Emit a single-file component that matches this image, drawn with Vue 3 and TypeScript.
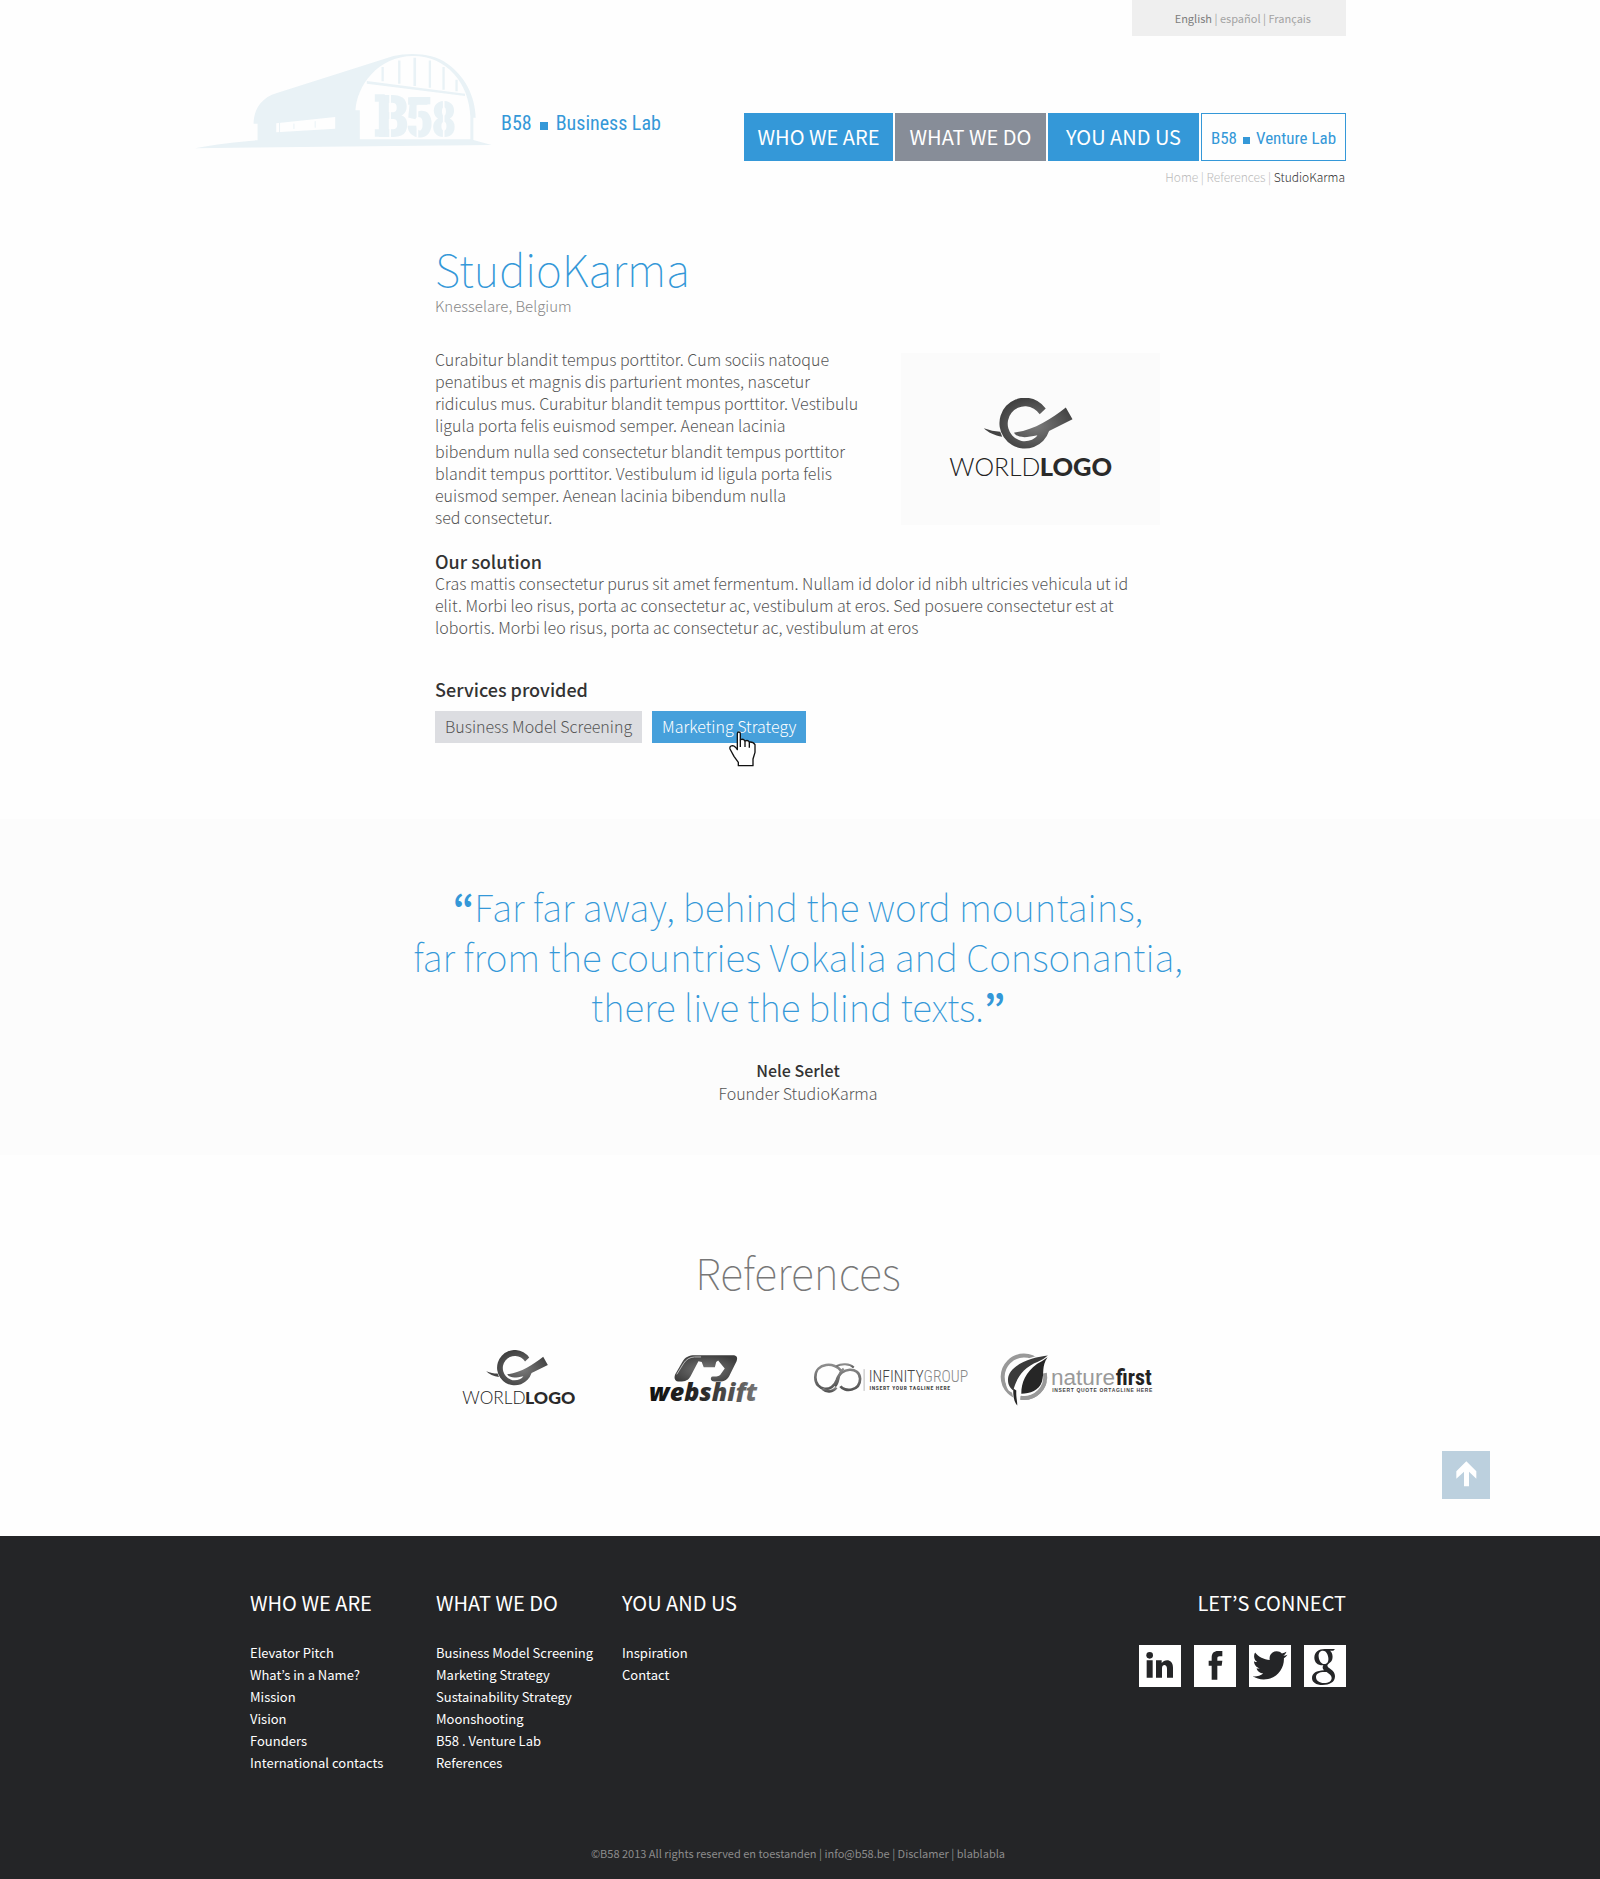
<script setup lang="ts">
interface NavItem { label: string; tone: 'blue' | 'grey' }
interface FooterColumn { title: string; links: string[] }

const languages: string[] = ['English', 'español', 'Français']
const nav: NavItem[] = [
  { label: 'WHO WE ARE', tone: 'blue' },
  { label: 'WHAT WE DO', tone: 'grey' },
  { label: 'YOU AND US', tone: 'blue' },
]
const columns: FooterColumn[] = [
  { title: 'WHO WE ARE', links: ['Elevator Pitch', 'What’s in a Name?', 'Mission', 'Vision', 'Founders', 'International contacts'] },
  { title: 'WHAT WE DO', links: ['Business Model Screening', 'Marketing Strategy', 'Sustainability Strategy', 'Moonshooting', 'B58 . Venture Lab', 'References'] },
  { title: 'YOU AND US', links: ['Inspiration', 'Contact'] },
]
</script>

<template>
  <div class="page">
    <svg width="0" height="0" class="defs" aria-hidden="true">
      <defs>
        <radialGradient id="steel" cx="50%" cy="55%" r="60%">
          <stop offset="0" stop-color="#7a7a7a" />
          <stop offset="1" stop-color="#3c3c3c" />
        </radialGradient>
        <linearGradient id="word" x1="0" x2="1" y1="0" y2="0">
          <stop offset="0" stop-color="#111" />
          <stop offset="0.5" stop-color="#2a2a2a" />
          <stop offset="1" stop-color="#777" />
        </linearGradient>
        <linearGradient id="ring" x1="0" x2="0" y1="0" y2="1">
          <stop offset="0" stop-color="#8d8d8d" />
          <stop offset="1" stop-color="#555" />
        </linearGradient>
        <symbol id="worldlogo" viewBox="176 172 490 238">
          <path fill="url(#steel)" d="M465 203A76 76 0 1 0 475 270L545 235L525 200C480 235 430 268 370 275C380 290 400 292 440 283C430 300 400 305 385 297A52 52 0 1 1 447 220Z" />
          <path fill="#444" d="M280 262C298 268 312 272 329 272L335 287C312 284 292 274 280 262Z" />
          <text x="177" y="404" class="world-thin">WORLD</text>
          <text x="447" y="404" class="world-bold">LOGO</text>
        </symbol>
      </defs>
    </svg>

    <header class="wrap">
      <div class="languages">
        <template v-for="(l, i) in languages" :key="l"><span v-if="i"> | </span><a href="#" :class="{ current: i === 0 }">{{ l }}</a></template>
      </div>
      <div class="masthead">
        <a href="#" class="brand" aria-label="B58 Business Lab">
          <svg class="hangar" viewBox="44 38 892 288" aria-hidden="true">
            <path fill="#e9f2f6" d="M220 250C220 212 240 172 290 158L640 47C690 36 760 38 802 70C852 105 886 165 887 232H880V299L935 314L44 324C100 312 180 303 232 300V250Z" />
            <path fill="#fefefe" d="M539 297V210H526C530 140 590 47 700 47C800 47 868 130 871 230V297Z" />
            <path fill="#e9f2f6" d="M560 122L855 160V167L560 130ZM604 80h7v43h-7zM654 60h7v70h-7zM700 52h8v85h-8zM746 60h7v82h-7zM787 80h7v68h-7zM826 118h7v35h-7z" />
            <path fill="#fefefe" d="M288 249L465 230V265L288 276Z" />
            <path stroke="#e9f2f6" stroke-width="3" d="M298 246V276M341 250V266M405 243V262" />
            <g class="stencil">
              <text x="588" y="289" font-size="178">B</text>
              <text x="677" y="289" font-size="166">5</text>
              <text x="753" y="289" font-size="152">8</text>
            </g>
            <path fill="#e9f2f6" d="M584 162h30v22h-30zM584 267h30v22h-30zM684 171h58v22h-58z" />
            <path stroke="#fefefe" stroke-width="5" d="M630 150V292M712 195V292M791 170V292" />
          </svg>
          <span class="lab brand-name">B58<i></i>Business Lab</span>
        </a>
        <div class="nav-block">
          <nav class="nav">
            <a v-for="n in nav" :key="n.label" href="#" :class="n.tone">{{ n.label }}</a>
            <a href="#" class="lab venture">B58<i></i>Venture Lab</a>
          </nav>
          <p class="crumbs"><a href="#">Home</a> | <a href="#">References</a> | <span>StudioKarma</span></p>
        </div>
      </div>
    </header>

    <main class="main">
      <h1>StudioKarma</h1>
      <p class="place">Knesselare, Belgium</p>
      <div class="intro">
        <div>
          <p>Curabitur blandit tempus porttitor. Cum sociis natoque<br>penatibus et magnis dis parturient montes, nascetur<br>ridiculus mus. Curabitur blandit tempus porttitor. Vestibulu<br>ligula porta felis euismod semper. Aenean lacinia</p>
          <p>bibendum nulla sed consectetur blandit tempus porttitor<br>blandit tempus porttitor. Vestibulum id ligula porta felis<br>euismod semper. Aenean lacinia bibendum nulla<br>sed consectetur.</p>
        </div>
        <div class="client"><svg class="client-logo" role="img" aria-label="Worldlogo"><use href="#worldlogo" /></svg></div>
      </div>
      <h2>Our solution</h2>
      <p>Cras mattis consectetur purus sit amet fermentum. Nullam id dolor id nibh ultricies vehicula ut id<br>elit. Morbi leo risus, porta ac consectetur ac, vestibulum at eros. Sed posuere consectetur est at<br>lobortis. Morbi leo risus, porta ac consectetur ac, vestibulum at eros</p>
      <h2 class="services">Services provided</h2>
      <div class="tags">
        <a href="#" class="tag">Business Model Screening</a>
        <a href="#" class="tag active">Marketing Strategy
          <svg class="cursor" viewBox="27 28 81 108" aria-hidden="true">
            <path fill="#fff" stroke="#111" stroke-width="4" stroke-linejoin="round" d="M52 84V36Q52 31 56.500 31Q61 31 61 36V54Q70 50 75 58Q84 54 88 61Q100 60 105 69V92L99 112V132H55V122L42 104L30 82Q28 73 37 72Q44 72 52 84Z" />
            <path fill="none" stroke="#111" stroke-width="4" d="M61 54V76M75 58V76M88 61V78" />
          </svg>
        </a>
      </div>
    </main>

    <section class="quote">
      <blockquote><b>“</b>Far far away, behind the word mountains,<br>far from the countries Vokalia and Consonantia,<br>there live the blind texts.<b>”</b></blockquote>
      <p class="name">Nele Serlet</p>
      <p>Founder StudioKarma</p>
    </section>

    <section class="references">
      <h2>References</h2>
      <div class="logos">
        <svg class="l-world" role="img" aria-label="Worldlogo"><use href="#worldlogo" /></svg>
        <svg class="l-webshift" viewBox="620 362 350 146" role="img" aria-label="Webshift">
          <path fill="url(#steel)" d="M716 446C700 446 697 436 701 424L722 388C732 370 745 366 760 366H876C890 366 892 374 888 384L868 424C862 440 850 446 836 446H826C812 446 806 440 812 431C822 430 832 432 838 426L852 406L832 382L826 386L822 402H788L782 386L772 384L748 430C742 442 732 446 716 446Z" />
          <path fill="none" stroke="#bbb" stroke-width="3" d="M706 424L726 392Q738 372 760 371H780" />
          <text x="622" y="504" class="webshift">webshift</text>
        </svg>
        <svg class="l-infinity" viewBox="68 96 464 92" role="img" aria-label="Infinity Group">
          <g fill="none" stroke="url(#ring)">
            <path stroke-width="8" d="M152 122C135 95 75 96 75 141C75 184 127 188 139 150C150 110 208 108 209 146C209 184 162 186 150 168" />
            <path stroke-width="7" d="M134 168C148 158 140 128 160 116" />
            <path stroke-width="6" d="M138 108C152 100 178 100 190 112" />
            <path stroke-width="8" d="M96 176C108 187 128 186 138 172" />
          </g>
          <path stroke="#999" stroke-width="2" d="M221 117V182" />
          <text x="235" y="156" class="inf">INFINITY<tspan fill="#888">GROUP</tspan></text>
          <text x="237" y="180" class="tagline inf-tag">INSERT YOUR TAGLINE HERE</text>
        </svg>
        <svg class="l-nature" viewBox="628 72 460 158" role="img" aria-label="Nature First">
          <circle cx="700" cy="143" r="64" fill="none" stroke="#999" stroke-width="12" />
          <path fill="#fefefe" d="M772 76C730 78 648 100 645 152C645 178 655 188 664 190L674 230H688L690 200C730 202 768 186 774 130Z" />
          <path fill="none" stroke="#999" stroke-width="12" d="M763 132A64 64 0 0 1 690 206" />
          <path fill="#3a3a3a" d="M772 79C730 83 655 105 652 150C651 168 660 178 668 184C676 150 696 116 742 98Q760 90 772 79Z" />
          <path fill="#262626" d="M771 84C752 112 762 130 754 158C746 184 718 194 692 194C692 160 705 130 740 104Q758 94 771 84Z" />
          <path fill="#262626" d="M668 178L677 184C676 205 680 215 680 229C670 218 667 200 668 178Z" />
          <text x="781" y="169" class="nature">nature</text>
          <text x="976" y="169" class="first">first</text>
          <text x="785" y="190" class="tagline nat-tag">INSERT QUOTE ORTAGLINE HERE</text>
        </svg>
      </div>
      <button type="button" class="to-top" aria-label="Back to top">
        <svg viewBox="0 0 144 144" aria-hidden="true"><path fill="#fff" d="M73 31L103 61V83L81 62V106H66V62L43 83V61Z" /></svg>
      </button>
    </section>

    <footer class="footer">
      <div class="wrap footer-row">
        <div v-for="c in columns" :key="c.title" class="col">
          <h3>{{ c.title }}</h3>
          <ul><li v-for="l in c.links" :key="l"><a href="#">{{ l }}</a></li></ul>
        </div>
        <div class="connect">
          <h3>LET’S CONNECT</h3>
          <div class="social">
            <a href="#" aria-label="LinkedIn"><svg viewBox="0 0 126 126"><path fill="#242527" d="M23 46h18v52H23zM51 46h17v8C76 42 102 40 102 68V98H84V71C84 57 69 57 69 70V98H51z" /><circle cx="32" cy="31" r="10" fill="#242527" /></svg></a>
            <a href="#" aria-label="Facebook"><svg viewBox="0 0 126 126"><path fill="#242527" d="M53 104V62H44V47H53V38C53 24 60 18 72 18H85V34H77C72 34 70 36 70 41V47H85L83 62H70V104z" /></svg></a>
            <a href="#" aria-label="Twitter"><svg viewBox="0 0 126 126"><path fill="#242527" transform="translate(11 9) scale(4.35)" d="M23.954 4.569c-.885.389-1.83.654-2.825.775 1.014-.611 1.794-1.574 2.163-2.723-.951.555-2.005.959-3.127 1.184-.896-.959-2.173-1.559-3.591-1.559-2.717 0-4.92 2.203-4.92 4.917 0 .39.045.765.127 1.124C7.691 8.094 4.066 6.13 1.64 3.161c-.427.722-.666 1.561-.666 2.475 0 1.71.87 3.213 2.188 4.096-.807-.026-1.566-.248-2.228-.616v.061c0 2.385 1.693 4.374 3.946 4.827-.413.111-.849.171-1.296.171-.314 0-.615-.03-.916-.086.631 1.953 2.445 3.377 4.604 3.417-1.68 1.319-3.809 2.105-6.102 2.105-.39 0-.779-.023-1.17-.067 2.189 1.394 4.768 2.209 7.557 2.209 9.054 0 13.999-7.496 13.999-13.986 0-.209 0-.42-.015-.63.961-.689 1.8-1.56 2.46-2.548z" /></svg></a>
            <a href="#" aria-label="Google"><svg viewBox="0 0 126 126"><path fill="#242527" fill-rule="evenodd" d="M62 12H93L88 17H78C88 24 88 44 80 51C72 58 66 61 74 68C84 75 93 80 93 94C93 112 76 120 56 120C36 120 24 112 24 99C24 84 38 77 60 76C55 71 55 66 58 61C42 62 31 52 31 38C31 22 44 12 62 12ZM57 17C47 17 43 25 44 35C45 47 52 57 61 57C71 57 74 49 73 39C72 27 66 17 57 17ZM62 81C44 81 36 87 36 96C36 107 46 114 60 114C74 114 83 108 83 99C83 91 76 87 68 81Z" /></svg></a>
          </div>
        </div>
      </div>
      <p class="legal">©B58 2013 All rights reserved en toestanden | <a href="#">info@b58.be</a> | <a href="#">Disclamer</a> | <a href="#">blablabla</a></p>
    </footer>
  </div>
</template>

<style>
body { margin: 0; background: #fefefe; }
</style>

<style scoped>
.page { font-family: "Noto Sans CJK KR", "Noto Sans", sans-serif; font-size: 16px; line-height: 22px; font-weight: 300; color: #555; }
.page a { color: inherit; text-decoration: none; }
h1, h2, h3, p, ul, blockquote { margin: 0; padding: 0; }
.defs { display: block; height: 0; }
.wrap { box-sizing: border-box; max-width: 1100px; margin: 0 auto; padding-right: 4px; }

.languages { box-sizing: border-box; width: 214px; height: 36px; margin-left: auto; padding-right: 35px; background: #efefef; text-align: right; font-size: 11px; line-height: 36px; font-weight: 400; color: #a3a3a3; white-space: pre; }
.languages .current { color: #7d7d7d; }
.masthead { display: flex; justify-content: space-between; padding-top: 17px; }
.brand { display: flex; margin-left: -55px; }
.hangar { display: block; width: 297px; height: 96px; }
.stencil { font-family: "Roboto Condensed", "Roboto", sans-serif; font-weight: 900; fill: #e9f2f6; }
.lab { font-family: "Roboto Condensed", "Roboto", sans-serif; white-space: nowrap; }
.lab i { display: inline-block; width: 8px; height: 8px; margin: 0 8px; background: #3498d8; }
.page .brand-name { margin: 58px 0 0 9px; font-size: 20px; line-height: 24px; font-weight: 400; color: #3498d8; }
.nav-block { margin-top: 60px; }
.nav { display: grid; grid-template-columns: 149px 151px 151px 145px; gap: 2px; }
.nav a { box-sizing: border-box; height: 48px; text-align: center; font-size: 20px; line-height: 47px; font-weight: 400; color: #fff; }
.nav .blue { background: #3498d8; }
.nav .grey { background: #878d98; }
.nav .venture { border: 1px solid #3498d8; font-size: 17px; line-height: 48px; color: #3498d8; }
.nav .venture i { width: 7px; height: 7px; margin: 0 6px; }
.crumbs { margin-top: 8px; padding-right: 1px; text-align: right; font-size: 12px; line-height: 16px; color: #bbb; }
.crumbs span { color: #333; }

.main { box-sizing: border-box; max-width: 730px; margin: 0 auto; padding: 55px 0 76px; }
h1 { font-size: 44px; line-height: 56px; font-weight: 100; color: #3498d8; }
.place { font-size: 15px; line-height: 20px; color: #888; }
.intro { display: flex; justify-content: space-between; margin: 32px 5px 22px 0; }
.intro p + p { margin-top: 4px; }
.intro p { white-space: nowrap; }
.client { display: flex; align-items: center; justify-content: center; width: 259px; height: 172px; margin-top: 5px; background: #fbfbfb; }
.client-logo { width: 164px; height: 80px; margin-bottom: 2px; }
.main h2 { font-size: 18px; line-height: 22px; font-weight: 500; color: #333; }
.main .services { margin-top: 40px; }
.tags { display: flex; gap: 10px; margin-top: 11px; }
.tag { position: relative; padding: 0 10px 1px; line-height: 31px; background: #dcdde1; }
.page .tag.active { background: #46a0db; color: #fff; }
.cursor { position: absolute; left: 77px; top: 20px; width: 27px; height: 36px; }

.quote { padding: 62px 4px 50px 0; background: #fcfcfc; text-align: center; line-height: 23px; }
blockquote { margin-bottom: 28px; font-size: 37px; line-height: 50px; font-weight: 100; color: #3498d8; }
blockquote b { font-weight: 700; }
.name { font-weight: 500; color: #333; }

.references { display: flow-root; padding: 88px 0 37px; }
.references h2 { padding-right: 4px; text-align: center; font-size: 43px; line-height: 56px; font-weight: 100; color: #777; }
.logos { display: grid; grid-template-columns: 186px 165px 187px 153px; align-items: center; justify-content: center; height: 56px; margin: 50px 0 46px; padding-left: 15px; }
.l-world { width: 114px; height: 56px; }
.l-webshift { width: 116px; height: 48px; }
.l-infinity { width: 155px; height: 31px; }
.l-nature { width: 153px; height: 53px; margin-top: 4px; }
.to-top { display: block; width: 48px; height: 48px; margin: 0 110px 0 auto; padding: 0; border: 0; background: #bcd0de; }
.to-top svg { display: block; }

.world-thin { font-family: "Lato", sans-serif; font-size: 74px; font-weight: 300; fill: #222; }
.world-bold { font-family: "Lato", sans-serif; font-size: 76px; font-weight: 900; fill: #2a2a2a; }
.webshift { font-family: "Open Sans", sans-serif; font-size: 76px; font-weight: 800; font-style: italic; fill: url(#word); }
.inf { font-family: "Roboto Condensed", "Roboto", sans-serif; font-size: 47px; font-weight: 300; fill: #444; }
.tagline { font-family: "Roboto Condensed", "Roboto", sans-serif; font-weight: 700; fill: #444; }
.inf-tag { font-size: 17px; letter-spacing: 2px; }
.nat-tag { font-family: "Liberation Sans", sans-serif; font-size: 15px; letter-spacing: 2px; }
.nature { font-family: "Liberation Sans", sans-serif; font-size: 68px; fill: #999; }
.first { font-family: "Roboto Condensed", "Roboto", sans-serif; font-size: 66px; font-weight: 700; fill: #222; }

.footer { padding: 53px 0 18px; background: #242527; color: #fff; }
.footer-row { display: flex; }
.col { flex: 0 0 186px; }
.footer h3 { margin-bottom: 25px; font-size: 20px; line-height: 28px; font-weight: 400; white-space: nowrap; }
.footer ul { list-style: none; font-size: 13px; font-weight: 400; white-space: nowrap; }
.connect { margin-left: auto; }
.connect h3 { text-align: right; }
.social { display: flex; gap: 13px; margin-top: 28px; }
.social a { display: block; width: 42px; height: 42px; background: #fff; }
.social svg { display: block; }
.legal { margin-top: 71px; padding-right: 4px; text-align: center; font-size: 11px; line-height: 16px; font-weight: 400; color: #8c8c8c; }
</style>
